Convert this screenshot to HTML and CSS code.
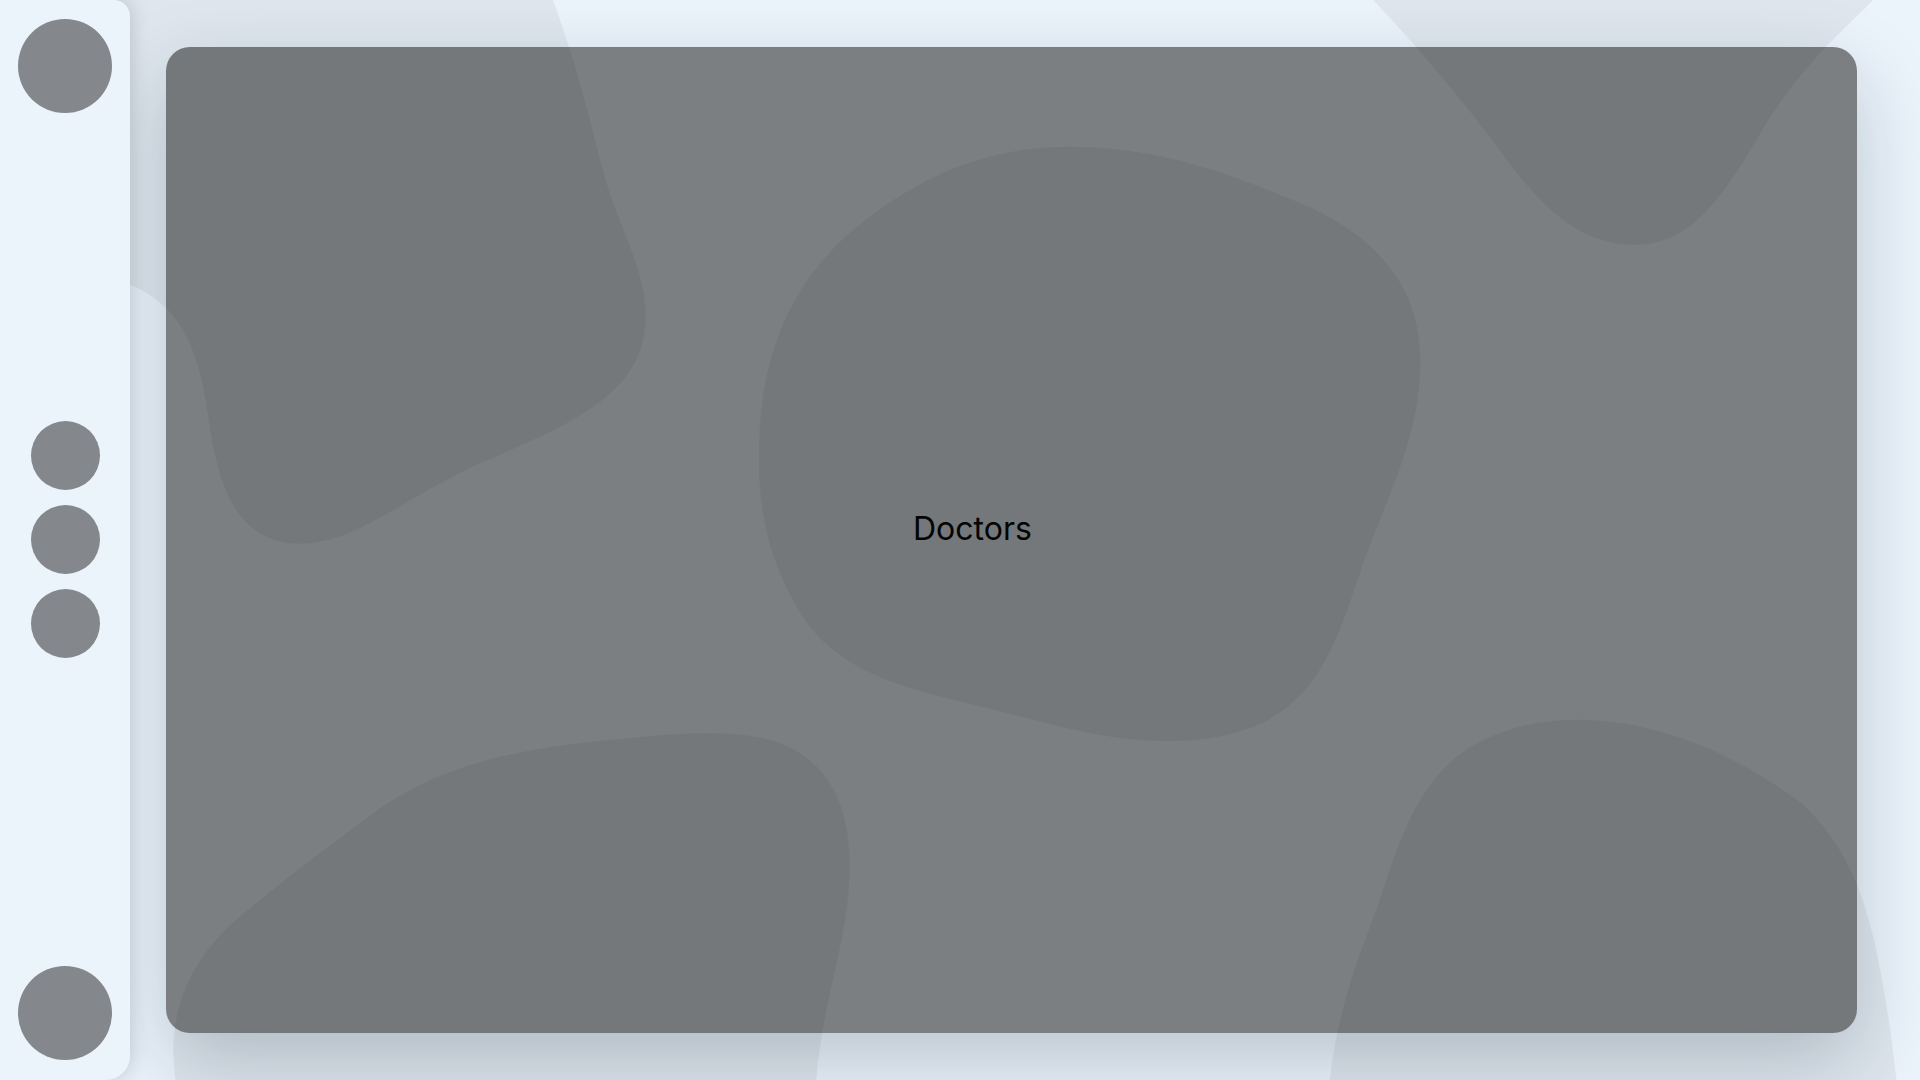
FILE: index.html
```html
<!DOCTYPE html>
<html lang="en">
<head>
<meta charset="utf-8">
<title>Doctors</title>
<link rel="stylesheet" href="styles.css">
</head>
<body>
<div class="app">
  <aside class="sidebar">
    <div class="avatar"></div>
    <nav class="nav">
      <div class="nav-dot"></div>
      <div class="nav-dot"></div>
      <div class="nav-dot"></div>
    </nav>
    <div class="avatar"></div>
  </aside>
  <main class="main">
    <section class="panel">
      <h1 class="title">Doctors</h1>
    </section>
  </main>
  <svg class="blobs" viewBox="0 0 1568 882" preserveAspectRatio="none" aria-hidden="true">
    <path d="M 40 -10 L 448 -10 C 470 50, 480 90, 490 130 C 505 190, 530 220, 527 265 C 524 320, 470 345, 400 375 C 330 405, 295 442, 248 444 C 195 446, 178 400, 170 340 C 163 290, 150 250, 105 232 C 60 215, 30 100, 40 -10 Z"/>
    <path d="M 865 120 C 940 118, 1000 140, 1060 165 C 1120 190, 1160 230, 1160 295 C 1160 360, 1130 410, 1110 470 C 1085 545, 1065 600, 965 605 C 900 608, 840 585, 780 572 C 720 558, 675 540, 650 495 C 625 450, 618 410, 620 360 C 622 290, 645 230, 700 185 C 750 145, 800 122, 865 120 Z"/>
    <path d="M 1112 -10 L 1540 -10 C 1500 30, 1470 55, 1440 105 C 1405 165, 1380 200, 1335 200 C 1290 200, 1260 170, 1230 130 C 1190 75, 1150 30, 1112 -10 Z"/>
    <path d="M 145 892 C 135 840, 145 790, 200 745 C 240 712, 270 690, 310 660 C 370 620, 430 612, 490 605 C 540 600, 580 595, 620 602 C 670 612, 695 650, 694 710 C 693 770, 670 820, 666 892 Z"/>
    <path d="M 1085 892 C 1090 830, 1110 780, 1125 740 C 1145 680, 1160 630, 1210 605 C 1240 590, 1270 587, 1300 588 C 1370 592, 1430 625, 1470 655 C 1520 700, 1535 760, 1550 892 Z"/>
  </svg>
</div>
</body>
</html>
```

FILE: styles.css
```css
html, body {
  margin: 0;
  padding: 0;
  height: 100%;
}

body {
  background: #ebf3fb;
  font-family: Inter, "Noto Sans", sans-serif;
  overflow: hidden;
}

.app {
  position: relative;
  display: flex;
  width: 100vw;
  height: 100vh;
}

.sidebar {
  position: relative;
  z-index: 3;
  flex: 0 0 130px;
  height: 100vh;
  box-sizing: border-box;
  padding: 19px 0 20px;
  background: #ebf3fb;
  border-radius: 0 16px 24px 0;
  box-shadow: 0 0 20px rgba(30, 45, 60, 0.22);
  display: flex;
  flex-direction: column;
  align-items: center;
  justify-content: space-between;
}

.avatar {
  width: 94px;
  height: 94px;
  border-radius: 50%;
  background: #84878b;
}

.nav {
  display: flex;
  flex-direction: column;
  align-items: center;
  gap: 15px;
}

.nav-dot {
  width: 69px;
  height: 69px;
  border-radius: 50%;
  background: #84878b;
}

.main {
  flex: 1 1 auto;
  box-sizing: border-box;
  padding: 47px 63px 47px 36px;
  display: flex;
}

.panel {
  flex: 1 1 auto;
  position: relative;
  z-index: 1;
  background: #7b7f82;
  border-radius: 24px;
  box-shadow: 0 30px 80px rgba(20, 35, 50, 0.22);
  display: flex;
  align-items: center;
  justify-content: flex-start;
  box-sizing: border-box;
  padding-left: 747px;
  padding-bottom: 22px;
}

.title {
  margin: 0;
  font-size: 32px;
  font-weight: 400;
  line-height: 1.2;
  color: #050505;
}

.blobs {
  position: absolute;
  inset: 0;
  width: 100%;
  height: 100%;
  z-index: 2;
  pointer-events: none;
}

.blobs path {
  fill: rgba(0, 0, 0, 0.052);
}
```
